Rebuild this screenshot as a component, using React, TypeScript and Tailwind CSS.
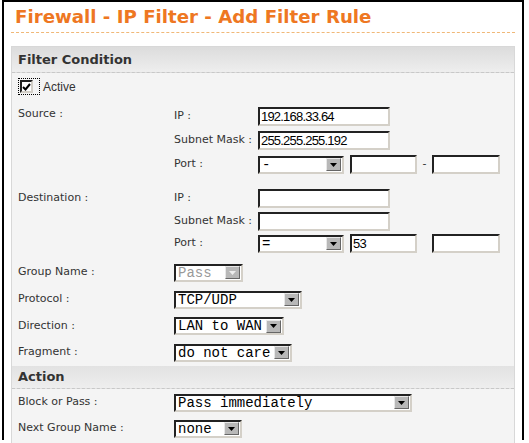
import React from "react";

function Input({ w, value }: { w: number; value?: string }) {
  return (
    <div
      className="h-[19px] bg-white border-2 border-t-[#222] border-l-[#222] border-r-[#d4d0c8] border-b-[#d4d0c8] text-[13px] leading-[15px] tracking-[-0.8px] pl-[1px] text-black [font-family:'Liberation_Sans',sans-serif]"
      style={{ width: w }}
    >
      {value}
    </div>
  );
}

function Select({ w, value, disabled }: { w: number; value: string; disabled?: boolean }) {
  return (
    <div
      className="h-[18px] bg-white border-2 border-t-[#222] border-l-[#222] border-r-[#d4d0c8] border-b-[#d4d0c8] flex items-center justify-between pl-[2px] pr-[1px]"
      style={{ width: w }}
    >
      <span
        className={`text-[14px] leading-[14px] whitespace-pre [font-family:'Liberation_Mono',monospace] ${
          disabled ? "text-[#999]" : "text-black"
        }`}
      >
        {value}
      </span>
      <span className="w-[15px] h-[13px] bg-[#b8b8b8] border border-t-[#e8e8e8] border-l-[#e8e8e8] border-r-[#666] border-b-[#666] flex items-center justify-center">
        <svg width="7" height="4" viewBox="0 0 7 4">
          <path d="M0 0h7L3.5 4z" fill={disabled ? "#eee" : "#000"} />
        </svg>
      </span>
    </div>
  );
}

function Row({ h, label, children }: { h: number; label: string; children: React.ReactNode }) {
  return (
    <div className="flex items-center" style={{ height: h }}>
      <div className="w-[156px] shrink-0">{label}</div>
      {children}
    </div>
  );
}

function Sub({ h, label, children }: { h: number; label: string; children: React.ReactNode }) {
  return (
    <div className="flex items-center" style={{ height: h }}>
      <div className="w-[84px] shrink-0 whitespace-nowrap">{label}</div>
      {children}
    </div>
  );
}

export default function App() {
  return (
    <div className="w-[529px] h-[443px] bg-white overflow-hidden">
      <div className="ml-[2px] w-[522px] h-[440px] border-t-2 border-l-2 border-r-2 border-black bg-white px-[7px] pt-[3px] [font-family:'DejaVu_Sans',sans-serif]">
        <h1 className="pl-[4px] text-[18.2px] leading-[24px] font-bold text-[#ee7722]">
          Firewall - IP Filter - Add Filter Rule
        </h1>
        <div className="mt-[3px] border-t border-dashed border-[#f0b878]" />
        <div className="mt-[13px] border border-[#d8d8d8] bg-[#f4f4f4] h-[400px] text-[11px] text-[#333]">
          <div className="h-[26px] bg-gradient-to-b from-[#dcdcdc] to-[#eeeeee] border-b border-dashed border-[#c8c8c8] flex items-center pl-[6px] text-[13px] font-bold text-[#333]">
            Filter Condition
          </div>
          <div className="px-[6px]">
            <div className="h-[27px] flex items-center">
              <div className="border border-dotted border-black flex items-center pl-[1px] pr-[6px] h-[17px]">
                <div className="w-[13px] h-[13px] bg-white border-2 border-t-[#222] border-l-[#222] border-r-[#d4d0c8] border-b-[#d4d0c8] flex items-center justify-center">
                  <svg width="9" height="8" viewBox="0 0 9 8">
                    <path d="M1 4l2.5 2.5L8 1" stroke="#000" strokeWidth="2" fill="none" />
                  </svg>
                </div>
              </div>
              <span className="ml-[3px] text-[12px] [font-family:'Liberation_Sans',sans-serif]">Active</span>
            </div>

            <div className="flex mt-[4px]">
              <div className="w-[156px] shrink-0 leading-[20px]">Source :</div>
              <div>
                <Sub h={24} label="IP :">
                  <Input w={132} value="192.168.33.64" />
                </Sub>
                <Sub h={24} label="Subnet Mask :">
                  <Input w={132} value="255.255.255.192" />
                </Sub>
                <Sub h={25} label="Port :">
                  <Select w={86} value="-" />
                  <div className="ml-[6px]">
                    <Input w={67} />
                  </div>
                  <div className="w-[15px] text-center">-</div>
                  <Input w={68} />
                </Sub>
              </div>
            </div>

            <div className="flex mt-[9px]">
              <div className="w-[156px] shrink-0 leading-[24px]">Destination :</div>
              <div>
                <Sub h={24} label="IP :">
                  <Input w={132} />
                </Sub>
                <Sub h={23} label="Subnet Mask :">
                  <Input w={132} />
                </Sub>
                <Sub h={21} label="Port :">
                  <Select w={86} value="=" />
                  <div className="ml-[6px]">
                    <Input w={67} value="53" />
                  </div>
                  <div className="w-[15px]" />
                  <Input w={68} />
                </Sub>
              </div>
            </div>

            <div className="mt-[5px]">
              <Row h={27} label="Group Name :">
                <Select w={69} value="Pass" disabled />
              </Row>
              <Row h={27} label="Protocol :">
                <Select w={128} value="TCP/UDP" />
              </Row>
              <Row h={26} label="Direction :">
                <Select w={110} value="LAN to WAN" />
              </Row>
              <Row h={27} label="Fragment :">
                <Select w={118} value="do not care" />
              </Row>
            </div>
          </div>
          <div className="h-[23px] bg-gradient-to-b from-[#e2e2e2] to-[#eeeeee] border-b border-dashed border-[#c8c8c8] flex items-center pl-[6px] text-[13px] font-bold text-[#333]">
            Action
          </div>
          <div className="px-[6px]">
            <Row h={27} label="Block or Pass :">
              <Select w={238} value="Pass immediately" />
            </Row>
            <Row h={25} label="Next Group Name :">
              <Select w={68} value="none" />
            </Row>
          </div>
        </div>
      </div>
    </div>
  );
}
